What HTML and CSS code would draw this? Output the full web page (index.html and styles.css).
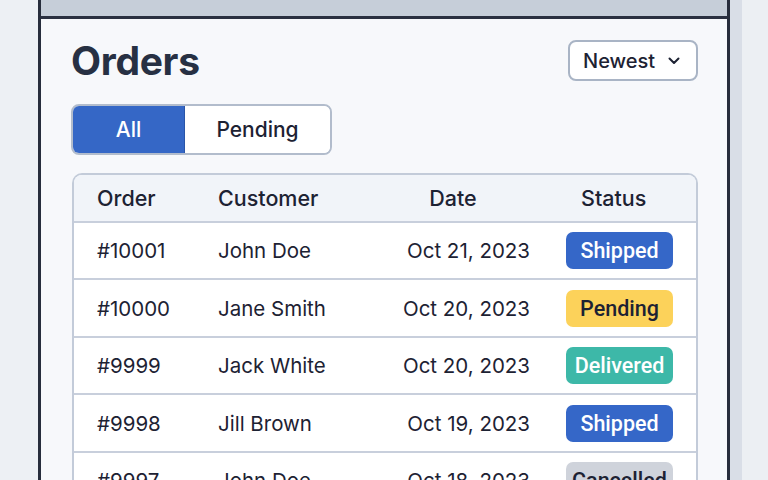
FILE: index.html
```html
<!DOCTYPE html>
<html lang="en">
<head>
<meta charset="utf-8">
<title>Orders</title>
<link rel="stylesheet" href="styles.css">
</head>
<body>
<div class="page">
  <div class="gutter"></div>
  <div class="frame">
    <div class="topbar"></div>
    <main class="content">
      <header class="head">
        <h1 class="title">Orders</h1>
        <button class="sort">Newest
          <svg class="chev" width="12" height="8" viewBox="0 0 12 8"><path d="M1.5 1.5 L6 6 L10.5 1.5" fill="none" stroke="#1d2233" stroke-width="2" stroke-linecap="round" stroke-linejoin="round"/></svg>
        </button>
      </header>
      <div class="tabs">
        <button class="tab active">All</button>
        <button class="tab">Pending</button>
      </div>
      <div class="table">
        <div class="row thead">
          <div class="c1">Order</div>
          <div class="c2">Customer</div>
          <div class="c3 h">Date</div>
          <div class="c4 h">Status</div>
        </div>
        <div class="row">
          <div class="c1">#10001</div>
          <div class="c2">John Doe</div>
          <div class="c3">Oct 21, 2023</div>
          <div class="c4"><span class="badge shipped">Shipped</span></div>
        </div>
        <div class="row">
          <div class="c1">#10000</div>
          <div class="c2">Jane Smith</div>
          <div class="c3">Oct 20, 2023</div>
          <div class="c4"><span class="badge pending">Pending</span></div>
        </div>
        <div class="row">
          <div class="c1">#9999</div>
          <div class="c2">Jack White</div>
          <div class="c3">Oct 20, 2023</div>
          <div class="c4"><span class="badge delivered">Delivered</span></div>
        </div>
        <div class="row">
          <div class="c1">#9998</div>
          <div class="c2">Jill Brown</div>
          <div class="c3">Oct 19, 2023</div>
          <div class="c4"><span class="badge shipped">Shipped</span></div>
        </div>
        <div class="row">
          <div class="c1">#9997</div>
          <div class="c2">John Doe</div>
          <div class="c3">Oct 18, 2023</div>
          <div class="c4"><span class="badge cancelled">Cancelled</span></div>
        </div>
      </div>
    </main>
  </div>
  <div class="strip"></div>
</div>
</body>
</html>
```
FILE: styles.css
```css
* { box-sizing: border-box; }
html, body { margin: 0; padding: 0; }
body {
  width: 768px;
  height: 480px;
  overflow: hidden;
  background: #eceff3;
  font-family: Inter, "Noto Sans", sans-serif;
  color: #1d2233;
}
.page {
  display: flex;
  height: 480px;
}
.gutter {
  width: 38px;
  flex: none;
  background: #edf0f4;
}
.frame {
  width: 692px;
  flex: none;
  border-left: 3px solid #272d3c;
  border-right: 3px solid #272d3c;
  background: #f7f8fb;
  display: flex;
  flex-direction: column;
  overflow: hidden;
}
.strip {
  width: 12px;
  flex: none;
  background: #d9dee7;
}
.topbar {
  height: 19px;
  flex: none;
  background: #c6ced9;
  border-bottom: 3px solid #2a3041;
}
.content {
  padding: 21px 29px 0 30px;
}
.head {
  display: flex;
  justify-content: space-between;
  align-items: center;
  height: 41px;
}
.title {
  margin: 0;
  font-size: 39px;
  font-weight: 700;
  letter-spacing: -0.3px;
  color: #273043;
  line-height: 41px;
}
.sort {
  display: flex;
  align-items: center;
  gap: 13px;
  height: 41px;
  width: 130px;
  padding: 0 0 0 13px;
  border: 2px solid #a9b4c5;
  border-radius: 8px;
  background: #fff;
  font-family: Inter, sans-serif;
  font-size: 20px;
  font-weight: 500;
  color: #1d2233;
}
.tabs {
  display: flex;
  width: 261px;
  height: 51px;
  margin-top: 23px;
  border: 2px solid #b2bccc;
  border-radius: 8px;
  overflow: hidden;
  background: #fff;
}
.tab {
  border: none;
  background: #fff;
  font-family: Inter, sans-serif;
  font-size: 21px;
  font-weight: 500;
  color: #1d2233;
  padding: 0;
  flex: 1 1 auto;
}
.tab.active {
  width: 112px;
  flex: none;
  background: #3567c6;
  color: #fff;
  border-right: 1px solid #2a55a8;
}
.table {
  margin-top: 18px;
  width: 626px;
  margin-left: 1px;
  border: 2px solid #c3cbd9;
  border-bottom: none;
  border-radius: 10px 10px 0 0;
  background: #fff;
  overflow: hidden;
}
.row {
  display: grid;
  grid-template-columns: 144px 172px 156px 150px;
  align-items: center;
  height: 57px;
  border-top: 2px solid #c8cfdc;
  font-size: 20.5px;
}
.row:nth-child(odd) { height: 58px; }
.row.thead {
  border-top: none;
  height: 46px;
  background: #f1f4f9;
  font-weight: 500;
  font-size: 21.5px;
}
.c1 { padding-left: 23px; }
.c2 { padding-left: 0; }
.c3 { text-align: right; padding-right: 16px; }
.c3.h { text-align: center; padding-right: 0; padding-left: 0; margin-left: -30px; }
.c4 { padding-left: 20px; }
.c4.h { padding-left: 35px; }
.badge {
  display: inline-block;
  width: 107px;
  height: 37px;
  line-height: 37px;
  text-align: center;
  border-radius: 7px;
  font-family: Roboto, Inter, sans-serif;
  font-size: 21.5px;
  font-weight: 500;
}
.shipped { background: #3567c8; color: #fff; }
.pending { background: #fcd25a; color: #1d2233; }
.delivered { background: #3db8a8; color: #fff; }
.cancelled { background: #cfd3db; color: #1d2233; }
```
